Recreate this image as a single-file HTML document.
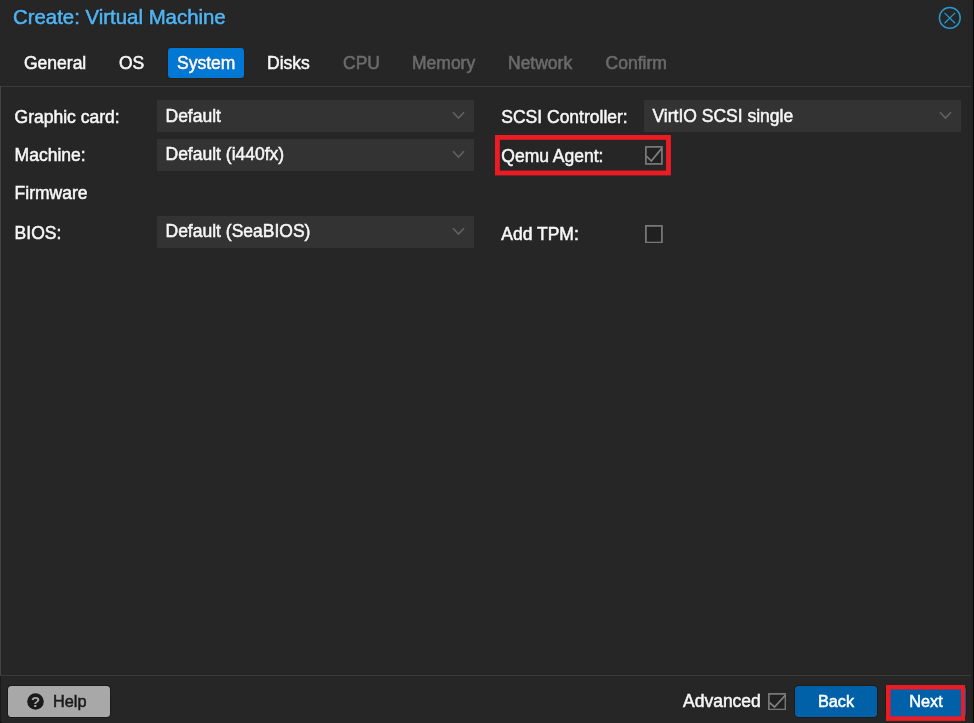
<!DOCTYPE html>
<html><head><meta charset="utf-8"><title>Create: Virtual Machine</title>
<style>
html,body{margin:0;padding:0;}
body{width:974px;height:723px;background:#0c0c0c;position:relative;overflow:hidden;font-family:"Liberation Sans",Arial,Helvetica,sans-serif;color:#f7f7f7;font-size:17.5px;}
.abs{position:absolute;white-space:nowrap;line-height:1;}
#root{position:absolute;left:0;top:0;width:974px;height:723px;will-change:transform;background:#262626;border-radius:0 0 3.5px 3.5px;overflow:hidden;}
#title{left:13px;top:6px;font-size:20.4px;text-shadow:0 0 1.5px #1a0d00;-webkit-text-stroke:0.55px #4fb4f4;color:#4fb4f4;line-height:22px;}
.tab{top:48px;height:30px;line-height:30px;font-size:17.5px;color:#f7f7f7;-webkit-text-stroke:0.55px currentColor;text-shadow:0 0 1px #000;}
.tab.dis{color:#6b6b6b;text-shadow:none;}
.tab.act{background:#0078d4;border-radius:3px;box-shadow:0 0 0 1px #2a2118;color:#fff;text-align:center;}
.hline{left:0;width:974px;height:1px;background:#3a3a3a;}
.lbl{font-size:17.5px;color:#f7f7f7;line-height:20px;margin-top:1px;-webkit-text-stroke:0.55px #f7f7f7;text-shadow:0 0 1px #000;}
.fld{height:31.5px;background:#333333;}
.fld span{position:absolute;left:8.5px;top:1px;transform:translateY(0.45px);line-height:31px;-webkit-text-stroke:0.55px #f7f7f7;font-size:17.5px;color:#f7f7f7;text-shadow:0 0 1px #000;}
.fld svg{position:absolute;right:9px;top:11px;}
.btn{height:31px;line-height:31px;border-radius:3.5px;font-size:16.3px;text-align:center;-webkit-text-stroke:0.5px currentColor;}
.blue{background:#0061a8;color:#fff;box-shadow:0 0 0 1px #241c14;}
</style></head><body><div id="root">
<div class="abs" id="title">Create: Virtual Machine</div>
<svg class="abs" style="left:937px;top:5px" width="26" height="26" viewBox="0 0 26 26"><circle cx="12.8" cy="12.9" r="10.35" fill="none" stroke="#2797ce" stroke-width="1.5"/><path d="M7.5 7.9 L18.1 18.2 M18.1 7.9 L7.5 18.2" stroke="#2797ce" stroke-width="1.3" fill="none"/></svg>

<div class="abs tab" style="left:24px">General</div>
<div class="abs tab" style="left:119px">OS</div>
<div class="abs tab act" style="left:168px;width:76.4px">System</div>
<div class="abs tab" style="left:267px">Disks</div>
<div class="abs tab dis" style="left:343px">CPU</div>
<div class="abs tab dis" style="left:412px">Memory</div>
<div class="abs tab dis" style="left:508px">Network</div>
<div class="abs tab dis" style="left:605.6px">Confirm</div>

<div class="abs hline" style="top:86px"></div>
<div class="abs" style="left:0;top:86px;width:1px;height:590px;background:#444"></div>

<div class="abs lbl" style="left:14.6px;top:106px">Graphic card:</div>
<div class="abs fld" style="left:157px;top:100px;width:317px"><span>Default</span><svg width="13" height="9" viewBox="0 0 13 9"><path d="M1 1.2 L6.5 7 L12 1.2" fill="none" stroke="#626262" stroke-width="1.6"/></svg></div>
<div class="abs lbl" style="left:14.6px;top:144px">Machine:</div>
<div class="abs fld" style="left:157px;top:139px;width:317px"><span style="top:0">Default (i440fx)</span><svg width="13" height="9" viewBox="0 0 13 9"><path d="M1 1.2 L6.5 7 L12 1.2" fill="none" stroke="#626262" stroke-width="1.6"/></svg></div>
<div class="abs lbl" style="left:14.6px;top:182px">Firmware</div>
<div class="abs lbl" style="left:14.6px;top:222px">BIOS:</div>
<div class="abs fld" style="left:157px;top:216.4px;width:317px"><span style="top:-0.4px">Default (SeaBIOS)</span><svg width="13" height="9" viewBox="0 0 13 9"><path d="M1 1.2 L6.5 7 L12 1.2" fill="none" stroke="#626262" stroke-width="1.6"/></svg></div>

<div class="abs lbl" style="left:501.3px;top:106px">SCSI Controller:</div>
<div class="abs fld" style="left:644px;top:100px;width:317px"><span>VirtIO SCSI single</span><svg width="13" height="9" viewBox="0 0 13 9"><path d="M1 1.2 L6.5 7 L12 1.2" fill="none" stroke="#626262" stroke-width="1.6"/></svg></div>
<div class="abs lbl" style="left:501.3px;top:145px">Qemu Agent:</div>
<svg class="abs" style="left:645px;top:146.3px" width="17.8" height="18.8" viewBox="0 0 17.8 18.8"><rect x="0.9" y="0.9" width="16.00" height="17.00" fill="#202020" stroke="#767676" stroke-width="1.8"/><path d="M1.6 10.25 L6.32 15.04 L16.90 2.16" fill="none" stroke="#808080" stroke-width="1.7"/></svg>
<svg class="abs" style="left:495.1px;top:135.3px" width="175.9" height="40.4" viewBox="0 0 175.9 40.4"><rect x="2.4" y="2.4" width="171.1" height="35.6" fill="none" stroke="#ed1c24" stroke-width="4.8"/></svg>
<div class="abs lbl" style="left:501.3px;top:223px">Add TPM:</div>
<svg class="abs" style="left:644.9px;top:224.9px" width="17.8" height="18.5" viewBox="0 0 17.8 18.5"><rect x="0.9" y="0.9" width="16.00" height="16.70" fill="#202020" stroke="#767676" stroke-width="1.8"/></svg>

<div class="abs hline" style="top:675px"></div>
<div class="abs" style="left:971px;top:0;width:3px;height:723px;background:linear-gradient(90deg,#242424 0,#212121 55%,#0c0c0c 68%,#060606 100%)"></div>
<div class="abs" style="left:0;top:676px;width:0.8px;height:47px;background:#1a1a1a"></div>
<div class="abs btn" style="left:8px;top:686px;width:102px;background:#a8a8a8;color:#1a1a1a;box-shadow:0 0 0 1px #1a1a1a">
<svg class="abs" style="left:19px;top:7px" width="17" height="17" viewBox="0 0 17 17"><circle cx="8.5" cy="8.5" r="8.3" fill="#1a1a1a"/><text x="8.5" y="13.9" font-family="Liberation Sans, sans-serif" font-weight="bold" font-size="15" text-anchor="middle" fill="#a8a8a8">?</text></svg>
<span class="abs" style="left:45px;top:0;line-height:31px">Help</span></div>
<div class="abs lbl" style="left:683px;top:690px">Advanced</div>
<svg class="abs" style="left:767.7px;top:692.6px" width="18.4" height="17.5" viewBox="0 0 18.4 17.5"><rect x="0.9" y="0.9" width="16.60" height="15.70" fill="#202020" stroke="#767676" stroke-width="1.8"/><path d="M1.6 9.54 L6.53 14.00 L17.50 2.01" fill="none" stroke="#808080" stroke-width="1.7"/></svg>
<div class="abs btn blue" style="left:795.4px;top:686px;width:81.2px">Back</div>
<div class="abs btn blue" style="left:886px;top:686px;width:80px">Next</div>
<svg class="abs" style="left:885.5px;top:685.1px" width="79.5" height="35.9" viewBox="0 0 79.5 35.9"><rect x="2.25" y="2.25" width="75.0" height="31.4" fill="none" stroke="#ed1c24" stroke-width="4.5"/></svg>
</div></body></html>
